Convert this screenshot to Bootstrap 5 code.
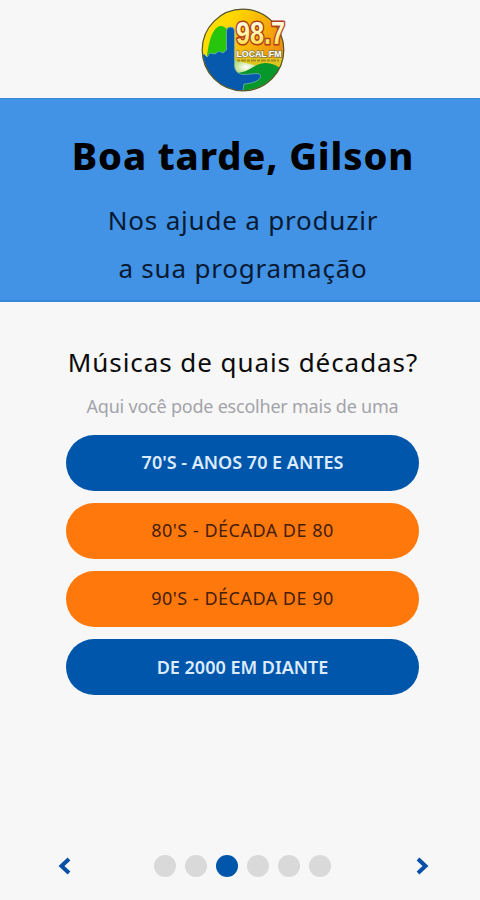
<!DOCTYPE html>
<html lang="pt-BR">
<head>
<meta charset="utf-8">
<meta name="viewport" content="width=device-width, initial-scale=1">
<title>98.7 Local FM</title>
<link href="https://cdn.jsdelivr.net/npm/bootstrap@5.3.0/dist/css/bootstrap.min.css" rel="stylesheet">
<style>
  body { background: #f7f7f7; font-family: "Noto Sans", "Open Sans", sans-serif; color: #0b0b0b; }
  .screen { height: 900px; overflow: hidden; }
  .brand-bar { height: 98px; padding: 6px 0 0 7px; }
  .greeting { height: 204px; background: #4292e5; border-top: 1px solid #3a86d8; border-bottom: 2px solid #3a86d8; padding: 28px 0 0 6px; color: #071a33; }
  .greeting h1 { font-size: 38px; line-height: 56px; font-weight: 800; color: #000; letter-spacing: .9px; margin-bottom: 13px; }
  .greeting p { font-size: 26px; line-height: 48px; letter-spacing: .8px; }
  .decades { padding: 36px 61px 0 66px; }
  .decades h2 { font-size: 26px; line-height: 48px; font-weight: 400; letter-spacing: .93px; margin-left: 1px; }
  .hint { font-size: 18px; line-height: 28px; color: #a4a3aa; letter-spacing: -.22px; margin: 6px 0 14.500px; }
  .choices { gap: 12.200px; }
  .choice { height: 56px; font-size: 18px; line-height: 1; border: 0; padding: 0 0 1px; }
  .choice-blue, .choice-blue:hover { background: #0056aa; color: #dcebff; font-weight: 600; }
  .choice-orange, .choice-orange:hover { background: #ff780c; color: #45200d; letter-spacing: .5px; }
  .pager { padding: 0 51px 23px 58px; }
  .pager button { line-height: 0; }
  .dots { gap: 9px; margin-left: -2px; }
  .dots span { width: 22px; height: 22px; background: #d9d9d9; }
  .dots .current { background: #0056aa; }
</style>
</head>
<body>
<main class="screen d-flex flex-column text-center">
  <header class="brand-bar d-flex justify-content-center">
    <svg width="92" height="88" viewBox="0 0 92 88" role="img" aria-label="98.7 Local FM">
      <defs>
        <linearGradient id="sky" x1="0" y1="0" x2="1" y2=".5"><stop offset="0" stop-color="#ffe600"/><stop offset=".35" stop-color="#ffd600"/><stop offset="1" stop-color="#ef8a10"/></linearGradient>
        <linearGradient id="digits" x1="0" y1="0" x2="0" y2="1"><stop offset="0" stop-color="#fff"/><stop offset=".5" stop-color="#fff6b0"/><stop offset="1" stop-color="#ffd21a"/></linearGradient>
        <radialGradient id="glow"><stop offset="0" stop-color="#fff"/><stop offset="1" stop-color="#b5dc7c"/></radialGradient>
        <clipPath id="disc"><circle cx="45" cy="44" r="40.500"/></clipPath>
      </defs>
      <circle cx="45" cy="44" r="41" fill="url(#sky)"/>
      <g clip-path="url(#disc)">
        <path d="M9 50C11 32 16 20 23 20C31 20 35 34 36 50Z" fill="#27c50b"/>
        <path d="M36 52H88V88H36Z" fill="#dfc61e"/>
        <path d="M36 54L60 60L44 68H36Z" fill="url(#glow)"/>
        <path d="M36 67C52 67 54 58 67 57C78 57 84 63 90 70V90H36Z" fill="#07972b"/>
        <path d="M0 52L6 48L9 51L12 47L17 48L21 45L25 47L28.500 44V25Q28.500 21 32.500 21Q36.500 21 36.500 25V60C37 66 41 68.500 47 68.500L58 67.500Q63 67.500 62.500 70.500C62 75 54 77.500 46 78L44 90H0Z" fill="#0759ad" stroke="#73b2b4" stroke-width=".8"/>
      </g>
      <circle cx="45" cy="44" r="40.800" fill="none" stroke="#53542f" stroke-width="1.200"/>
      <path d="M39 54.500H81" stroke="#a98b1e" stroke-width="2" stroke-dasharray="3 1 5 1"/>
      <g font-family="Liberation Sans, Arial, sans-serif" font-weight="700">
        <text x="38" y="37.500" font-size="32" textLength="49" lengthAdjust="spacingAndGlyphs" fill="url(#digits)" stroke="#b03a1a" stroke-width="3.200" paint-order="stroke" stroke-linejoin="round">98.7</text>
        <text x="38.500" y="51" font-size="9.500" textLength="45" lengthAdjust="spacingAndGlyphs" fill="#fff" stroke="#7d8052" stroke-width="1.400" paint-order="stroke">LOCAL FM</text>
      </g>
    </svg>
  </header>

  <section class="greeting">
    <h1>Boa tarde, Gilson</h1>
    <p class="mb-0">Nos ajude a produzir<br>a sua programação</p>
  </section>

  <section class="decades">
    <h2 class="mb-0 text-nowrap">Músicas de quais décadas?</h2>
    <p class="hint text-nowrap">Aqui você pode escolher mais de uma</p>
    <div class="d-grid choices">
      <button type="button" class="btn rounded-pill choice choice-blue">70'S - ANOS 70 E ANTES</button>
      <button type="button" class="btn rounded-pill choice choice-orange">80'S - DÉCADA DE 80</button>
      <button type="button" class="btn rounded-pill choice choice-orange">90'S - DÉCADA DE 90</button>
      <button type="button" class="btn rounded-pill choice choice-blue">DE 2000 EM DIANTE</button>
    </div>
  </section>

  <nav class="pager mt-auto d-flex justify-content-between align-items-center">
    <button type="button" class="btn p-0 border-0" aria-label="Anterior">
      <svg width="14" height="20" viewBox="0 0 14 20" fill="none" stroke="#0750a5" stroke-width="4"><path d="M11 3L3.500 10L11 17"/></svg>
    </button>
    <div class="dots d-flex">
      <span class="rounded-circle"></span><span class="rounded-circle"></span><span class="rounded-circle current"></span><span class="rounded-circle"></span><span class="rounded-circle"></span><span class="rounded-circle"></span>
    </div>
    <button type="button" class="btn p-0 border-0" aria-label="Próxima">
      <svg width="14" height="20" viewBox="0 0 14 20" fill="none" stroke="#0750a5" stroke-width="4"><path d="M3 3L10.500 10L3 17"/></svg>
    </button>
  </nav>
</main>
<script src="https://cdn.jsdelivr.net/npm/bootstrap@5.3.0/dist/js/bootstrap.bundle.min.js"></script>
</body>
</html>
